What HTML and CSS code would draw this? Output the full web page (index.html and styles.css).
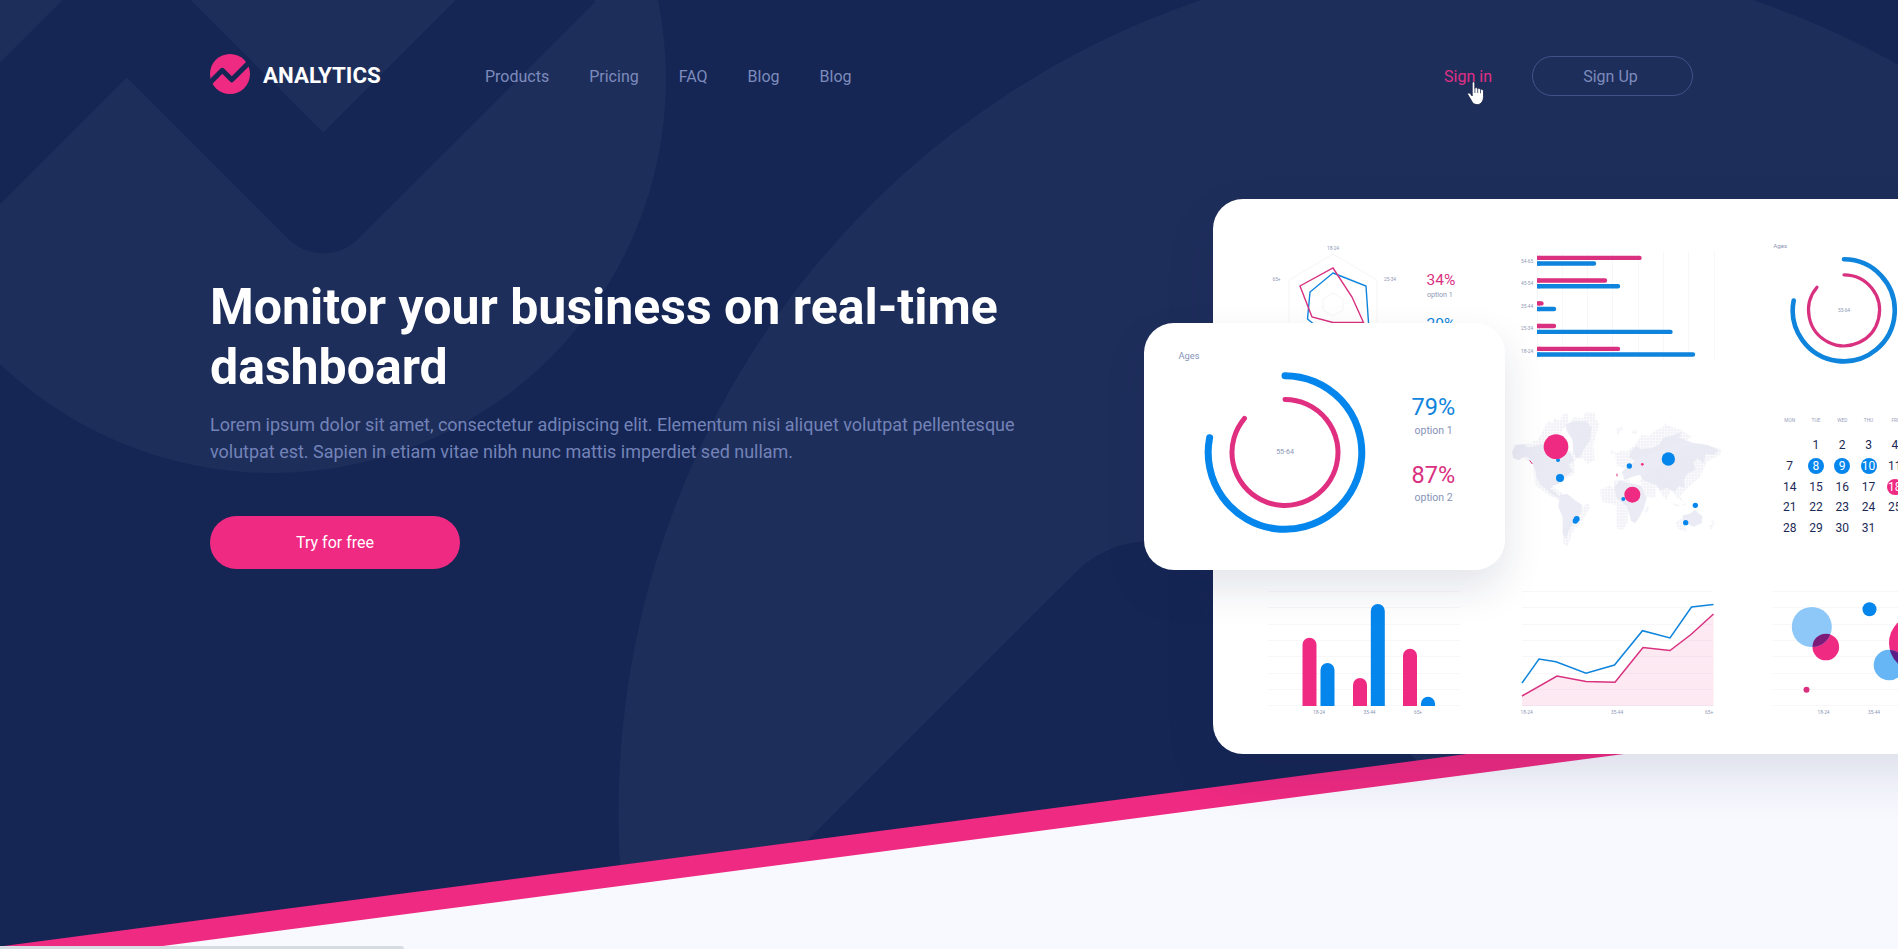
FILE: index.html
```html
<!DOCTYPE html>
<html lang="en">
<head>
<meta charset="utf-8">
<title>Analytics</title>
<link rel="stylesheet" href="styles.css">
</head>
<body>
<div class="page">
  <svg class="backdrop" viewBox="0 0 1898 949" aria-hidden="true">
    <rect width="1898" height="949" fill="#152654"/>
    <circle cx="272" cy="79" r="394" fill="#1e2e5b"/>
    <path d="M-60 193.5 L126.75 6.75 L323.25 203.25 L560 -33.5" fill="none" stroke="#152654" stroke-width="100" stroke-linejoin="round"/>
    <circle cx="1477" cy="813" r="858.5" fill="#1e2e5b"/>
    <path d="M802 1000 L1152 650 L1400 898" fill="none" stroke="#152654" stroke-width="218" stroke-linejoin="round"/>
    <path d="M0 946.4 L1898 697.4 V949 H0Z" fill="#ef2a82"/>
    <path d="M140 949 L1898 718 V949Z" fill="#f8f9ff"/>
  </svg>

  <header class="header">
    <a class="brand">
      <svg class="brand-mark" viewBox="0 0 40 40">
        <circle cx="20" cy="20" r="20" fill="#ef2a82"/>
        <path d="M-2 30.6 L12.3 16.3 L21.8 25.8 L42 5.6" fill="none" stroke="#152654" stroke-width="5" stroke-linejoin="round"/>
      </svg>
      <span class="brand-name">ANALYTICS</span>
    </a>
    <nav class="nav">
      <a>Products</a><a>Pricing</a><a>FAQ</a><a>Blog</a><a>Blog</a>
    </nav>
    <div class="account">
      <a class="sign-in">Sign in
        <svg class="pointer" viewBox="0 0 18 25"><path d="M5.2 2.2C5.2 .3 7.8 .3 7.8 2.2V7.2C8.2 6.2 10.4 6.5 10.6 7.8C11.2 6.9 13.2 7.3 13.4 8.6C14.2 7.9 16.3 8.2 16.5 10V15.5C16.5 19.5 14.5 23.6 10.3 23.6C6.8 23.6 5.4 21.8 4.2 19.2L.8 13.6C.1 12.2 2 11.4 3.2 12.6L5.2 15Z" fill="#fff" stroke="#111c3f" stroke-width=".8"/><path d="M7.9 7V12M10.7 8V12M13.5 9V12.3" stroke="#111c3f" stroke-width=".7"/></svg>
      </a>
      <a class="sign-up">Sign Up</a>
    </div>
  </header>

  <main class="hero">
    <section class="intro">
      <h1>Monitor your business on real-time dashboard</h1>
      <p>Lorem ipsum dolor sit amet, consectetur adipiscing elit. Elementum nisi aliquet volutpat pellentesque volutpat est. Sapien in etiam vitae nibh nunc mattis imperdiet sed nullam.</p>
      <button class="cta">Try for free</button>
    </section>

    <section class="dashboard">
      <svg class="panel" viewBox="1263 229 252 160">
        <g fill="none" stroke="#f3f2f6" stroke-width=".8">
          <path d="M1333 254L1377 280V330L1333 356L1289 330V280Z"/>
          <path d="M1333 267L1362 285V324L1333 342L1304 324V285Z" stroke="#fafafc"/>
          <path d="M1333 293L1343 299V310L1333 316L1323 310V299Z"/>
        </g>
        <path d="M1333 273L1366 286L1369 330L1333 340L1307.500 319L1310 292Z" fill="none" stroke="#0f84dc" stroke-width="1.400"/>
        <path d="M1333 268L1352 297L1363.500 322.500H1333L1312 317L1300 286Z" fill="none" stroke="#d9307f" stroke-width="1.400"/>
        <g class="tick mid"><text x="1333" y="249.500">18-24</text><text x="1276.500" y="281">65+</text><text x="1390" y="281">25-34</text></g>
        <text class="figure pink" x="1426.500" y="284.500">34%</text>
        <text class="caption" x="1427" y="297">option 1</text>
        <text class="figure blue" x="1426.500" y="329">20%</text>
      </svg>

      <svg class="panel" viewBox="1515 229 252 160">
        <path d="M1537.500 252V360M1562.500 252V360M1587.500 252V360M1612.500 252V360M1638.500 252V360M1663.500 252V360M1688.500 252V360M1714.500 252V360" stroke="#f6f7fa" stroke-width="1"/>
        <g fill="none" stroke-width="4.400" stroke-linecap="round">
          <path stroke="#d9307f" d="M1539.500 257.900H1639.500M1539.500 280.500H1605M1539.500 303.400H1541.500M1539.500 326H1554M1539.500 348.900H1618"/>
          <path stroke="#0f84dc" d="M1539.500 263.500H1594M1539.500 286.300H1618M1539.500 309H1554M1539.500 331.900H1670.500M1539.500 354.500H1693"/>
        </g>
        <g fill="none" stroke-width="4.400">
          <path stroke="#d9307f" d="M1537 257.900H1540M1537 280.500H1540M1537 303.400H1540M1537 326H1540M1537 348.900H1540"/>
          <path stroke="#0f84dc" d="M1537 263.500H1540M1537 286.300H1540M1537 309H1540M1537 331.900H1540M1537 354.500H1540"/>
        </g>
        <g class="tick"><text x="1521" y="262.500">54-65</text><text x="1521" y="285">45-54</text><text x="1521" y="307.500">35-44</text><text x="1521" y="330">25-34</text><text x="1521" y="352.500">18-24</text></g>
      </svg>

      <svg class="panel" viewBox="1767 229 252 160">
        <text class="tiny-title" x="1773.300" y="248.300">Ages</text>
        <path d="M1844 259.300A51 51 0 1 1 1793.700 300.500" fill="none" stroke="#0f84dc" stroke-width="4.600" stroke-linecap="round"/>
        <path d="M1844 274.800A35.500 35.500 0 1 1 1817 287.300" fill="none" stroke="#d9307f" stroke-width="3.200" stroke-linecap="round"/>
        <g class="tick mid"><text x="1844" y="311.800">55-64</text></g>
      </svg>

      <svg class="panel map" viewBox="1515 399 252 160">
        <defs><pattern id="dots" width="9" height="9" patternUnits="userSpaceOnUse"><rect width="7.500" height="7.500" fill="#e8e9f3"/></pattern></defs>
        <g transform="translate(1500 390) scale(.33333)">
          <g fill="#eaebf4">
            <path d="M36 185L48 165L70 163L84 172L108 168L132 160L200 180L213 193L222 212L205 225L218 243L196 260L176 282L160 286L150 296L163 304L176 318L190 324L181 326L158 314L141 300L123 286L110 264L106 240L94 210L76 198L56 211L40 204Z"/>
            <path d="M196 104L222 94L258 94L275 112L270 152L253 175L241 201L228 203L219 183L218 150L202 126Z"/>
            <path d="M180 314L202 312L224 330L246 345L243 368L224 394L207 420L198 446L188 430L188 382L175 350Z"/>
            <path d="M343 292L359 272L383 278L405 282L425 287L434 310L440 324L432 354L418 382L405 400L393 392L382 350L350 324Z"/>
            <path d="M374 270L365 246L387 228L405 211L386 202L395 180L410 167L423 178L455 174L478 164L490 143L522 135L545 126L538 143L580 159L625 166L657 181L640 195L618 192L610 220L594 205L580 217L587 239L560 252L551 274L555 294L536 287L525 305L501 294L481 301L470 286L443 276L427 268L420 254L397 260Z"/>
            <path d="M548 376L570 371L584 359L607 379L606 399L582 410L550 397Z"/>
          </g>
          <g fill="url(#dots)" opacity=".55">
            <path d="M130 120L145 92L158 98L163 84L180 92L190 72L203 70L205 98L180 130L205 150L205 180L120 180L95 155L112 152Z"/>
            <path d="M205 100L222 82L250 84L256 66L284 68L286 88L298 100L290 130L280 165L284 210L262 222L250 206L232 208Z"/>
            <path d="M40 190L70 205L100 225L105 285L150 318L178 330L190 312L160 290L224 250L222 215L240 196L205 180L80 160L40 165Z"/>
            <path d="M300 300L330 286L342 296L342 272L390 268L390 292L382 400L368 420L350 415L350 345L306 335Z"/>
            <path d="M345 190L362 182L380 184L405 165L425 135L446 138L460 125L500 105L545 120L575 140L560 150L480 180L400 210L380 240L350 225Z"/>
            <path d="M420 270L440 320L465 325L470 290L490 320L500 330L512 300L532 324L555 338L544 348L510 335L530 350L560 345L540 320L556 300L600 262L620 215L660 195L664 178L600 160L560 165Z"/>
            <path d="M188 420L240 360L260 340L270 345L268 358L238 405L226 412L216 430L212 445L202 470L190 460Z"/>
            <path d="M526 398L552 378L560 426L535 418ZM628 408L636 402L634 388L640 390L644 402L636 416L630 416ZM434 360L444 348L446 358L438 374Z"/>
            <path d="M348 115L366 110L372 118L360 122L352 136ZM398 120L412 122L408 132L396 130ZM332 182L346 184L344 192L330 190ZM490 110L494 98L500 104Z"/>
          </g>
          <g fill="#0586ec"><circle cx="174" cy="210" r="6"/><circle cx="180" cy="264" r="12"/><circle cx="230" cy="387" r="9"/><circle cx="226" cy="393" r="8"/><circle cx="388" cy="228" r="8"/><circle cx="505" cy="207" r="20"/><circle cx="370" cy="327" r="6"/><circle cx="586" cy="346" r="8"/><circle cx="557" cy="398" r="8"/></g>
          <g fill="#ef2a82"><circle cx="168" cy="170" r="37"/><circle cx="397" cy="314" r="24"/><circle cx="427" cy="223" r="4"/></g>
          <path d="M89 211L97 222M351 251V259" stroke="#d9307f" stroke-width="3"/>
        </g>
      </svg>

      <div class="calendar">
        <b>MON</b><b>TUE</b><b>WED</b><b>THU</b><b>FRI</b>
        <i></i><i>1</i><i>2</i><i>3</i><i>4</i>
        <i>7</i><i class="on">8</i><i class="on">9</i><i class="on">10</i><i>11</i>
        <i>14</i><i>15</i><i>16</i><i>17</i><i class="on hot">18</i>
        <i>21</i><i>22</i><i>23</i><i>24</i><i>25</i>
        <i>28</i><i>29</i><i>30</i><i>31</i>
      </div>

      <svg class="panel" viewBox="1263 569 252 160">
        <path class="rules" d="M1268 591.500H1460M1268 607.500H1460M1268 624.500H1460M1268 640.500H1460M1268 656.500H1460M1268 673.500H1460M1268 689.500H1460M1268 705.500H1460"/>
        <path d="M1302.500 706V644.700a7 7 0 0 1 14 0V706ZM1353 706V685a7 7 0 0 1 14 0V706ZM1403 706V655.700a7 7 0 0 1 14 0V706Z" fill="#ef2a82"/>
        <path d="M1320.500 706V670a7 7 0 0 1 14 0V706ZM1370.800 706V611a7 7 0 0 1 14 0V706ZM1421 706V703.700a7 7 0 0 1 14 0V706Z" fill="#0586ec"/>
        <g class="tick mid"><text x="1319" y="714.300">18-24</text><text x="1369.500" y="714.300">35-44</text><text x="1418" y="714.300">65+</text></g>
      </svg>

      <svg class="panel" viewBox="1515 569 252 160">
        <path class="rules" d="M1522 591.500H1713M1522 607.500H1713M1522 624.500H1713M1522 640.500H1713M1522 656.500H1713M1522 673.500H1713M1522 689.500H1713M1522 705.500H1713"/>
        <path d="M1522 696L1557 676L1586 681.500L1615 682.300L1643 647.500L1670 650.500L1691 634.500L1713.500 614V706H1522Z" fill="#ef2a82" opacity=".1"/>
        <path d="M1522 696L1557 676L1586 681.500L1615 682.300L1643 647.500L1670 650.500L1691 634.500L1713.500 614" fill="none" stroke="#d9307f" stroke-width="1.500"/>
        <path d="M1522 683L1539 659L1556 661.700L1586 673.300L1614.500 665L1642.500 630.700L1670 638L1691.500 607L1713.500 604.500" fill="none" stroke="#0f84dc" stroke-width="1.500"/>
        <g class="tick"><text x="1520.500" y="714.300">18-24</text><text x="1611" y="714.300">35-44</text><text x="1705" y="714.300">65+</text></g>
      </svg>

      <svg class="panel" viewBox="1767 569 252 160">
        <path class="rules" d="M1773 591.500H1966M1773 607.500H1966M1773 624.500H1966M1773 640.500H1966M1773 656.500H1966M1773 673.500H1966M1773 689.500H1966M1773 705.500H1966"/>
        <clipPath id="lens-a"><circle cx="1811.800" cy="627" r="20"/></clipPath>
        <clipPath id="lens-b"><circle cx="1889" cy="665" r="15.300"/></clipPath>
        <circle cx="1825.800" cy="647" r="13.300" fill="#ef2a82"/>
        <circle cx="1917" cy="643" r="28" fill="#ef2a82"/>
        <circle cx="1811.800" cy="627" r="20" fill="#8dc8f8"/>
        <circle cx="1889" cy="665" r="15.300" fill="#66b5f5"/>
        <circle cx="1825.800" cy="647" r="13.300" fill="#7d1b78" clip-path="url(#lens-a)"/>
        <circle cx="1917" cy="643" r="28" fill="#5c1f86" clip-path="url(#lens-b)"/>
        <circle cx="1869.500" cy="609.300" r="7" fill="#0586ec"/>
        <circle cx="1806.500" cy="689.700" r="3" fill="#d9307f"/>
        <g class="tick mid"><text x="1823.500" y="714.300">18-24</text><text x="1874" y="714.300">35-44</text></g>
      </svg>

      <div class="ages-card">
        <svg class="ages-chart" viewBox="1144 323 361 246">
          <text class="ages-title" x="1178.500" y="359">Ages</text>
          <path d="M1285 375.700A76.800 76.800 0 1 1 1209.600 437.800" fill="none" stroke="#0586ec" stroke-width="7" stroke-linecap="round"/>
          <path d="M1285 399.500A53 53 0 1 1 1244.500 418.300" fill="none" stroke="#e02f80" stroke-width="5" stroke-linecap="round"/>
          <text class="ages-center" x="1285" y="454">55-64</text>
          <text class="ages-figure blue" x="1411.500" y="415.300">79%</text>
          <text class="ages-caption" x="1414.500" y="433.700">option 1</text>
          <text class="ages-figure pink" x="1411.500" y="482.700">87%</text>
          <text class="ages-caption" x="1414.500" y="501">option 2</text>
        </svg>
      </div>
    </section>
  </main>
  <div class="status-strip"></div>
</div>
</body>
</html>
```
FILE: styles.css
```css
* { box-sizing: border-box; }
body {
  margin: 0;
  font-family: Roboto, "Liberation Sans", sans-serif;
}
.page {
  position: relative;
  width: 100%;
  height: 949px;
  overflow: hidden;
  background: #f8f9ff;
}
.backdrop {
  position: absolute;
  inset: 0;
  width: 1898px;
  height: 949px;
}
.header {
  position: relative;
  display: flex;
  align-items: center;
  height: 40px;
  margin: 54px 205px 0 210px;
}
.brand { display: flex; align-items: center; gap: 13px; width: 275px; }
.brand-mark { width: 40px; height: 40px; }
.brand-name { padding-top: 2px; color: #fff; font-size: 22.3px; font-weight: 700; line-height: 38px; }
.nav { display: flex; gap: 40px; padding-top: 6px; color: #7d8bbd; font-size: 16px; line-height: 20px; }
.account { display: flex; align-items: center; gap: 40px; margin-left: auto; padding-top: 4px; font-size: 16px; }
.sign-in { position: relative; color: #e02f86; }
.pointer { position: absolute; left: 23px; top: 14px; width: 18px; height: 25px; }
.sign-up {
  width: 161px;
  height: 40px;
  border: 1px solid #42528a;
  border-radius: 20px;
  color: #7d8bbd;
  line-height: 40px;
  text-align: center;
  padding-right: 4px;
}
.hero {
  position: relative;
  display: grid;
  grid-template-columns: 1003px 806px;
  padding-left: 210px;
}
.intro { padding-top: 183px; }
h1 {
  width: 800px;
  margin: 0;
  color: #fff;
  font-size: 50px;
  font-weight: 700;
  line-height: 60px;
}
.intro p {
  width: 815px;
  margin: 14px 0 51px;
  color: #7383b8;
  font-size: 17.98px;
  line-height: 27px;
}
.cta {
  display: block;
  width: 250px;
  height: 53px;
  border: 0;
  border-radius: 27px;
  background: #ef2a82;
  color: #fff;
  font: 400 16px Roboto, "Liberation Sans", sans-serif;
}
.dashboard {
  position: relative;
  display: grid;
  grid-template-columns: repeat(3, 252px);
  grid-template-rows: repeat(3, 160px);
  row-gap: 10px;
  height: 554.5px;
  margin-top: 105px;
  padding: 30px 0 0 50px;
  border-radius: 30px;
  background: #fff;
  box-shadow: 0 22px 50px rgba(24, 34, 84, .12);
}
.panel { display: block; width: 252px; height: 160px; }
.map { grid-column: 2; overflow: visible; }
.tick { font-size: 4.8px; fill: #8d97b5; }
.mid { text-anchor: middle; }
.figure { font-size: 15.5px; }
.caption { font-size: 7.1px; fill: #8d97b8; }
.pink { fill: #d9307f; }
.blue { fill: #0f84dc; }
.tiny-title { font-size: 6.2px; fill: #8d97b5; }
.rules { fill: none; stroke: #f7f7f9; stroke-width: 1; }
.calendar {
  display: grid;
  grid-template-columns: repeat(5, 26.3px);
  grid-template-rows: 26px repeat(5, 20.7px);
  align-items: center;
  justify-items: center;
  align-content: start;
  padding: 10px 0 0 9.5px;
}
.calendar b { color: #9aa2bd; font-size: 4.8px; font-weight: 400; padding-bottom: 4px; }
.calendar i { color: #1b2a55; font-size: 12px; font-style: normal; line-height: 16px; }
.calendar .on { width: 16px; border-radius: 50%; background: #0586ec; color: #fff; text-align: center; }
.calendar .hot { background: #ef2a82; }
.ages-card {
  position: absolute;
  left: -69px;
  top: 124px;
  width: 361px;
  height: 246.5px;
  border-radius: 30px;
  background: #fff;
  box-shadow: 0 18px 40px rgba(24, 34, 84, .12);
}
.ages-chart { display: block; width: 361px; height: 246px; }
.ages-title { font-size: 9.3px; fill: #8793b5; }
.ages-center { font-size: 7px; fill: #8793b5; text-anchor: middle; }
.ages-figure { font-size: 23.5px; }
.ages-caption { font-size: 10.5px; fill: #8793b8; }
.status-strip {
  position: absolute;
  left: 0;
  bottom: 0;
  width: 404px;
  height: 3px;
  border-top-right-radius: 3px;
  background: #d7dce2;
}
```
